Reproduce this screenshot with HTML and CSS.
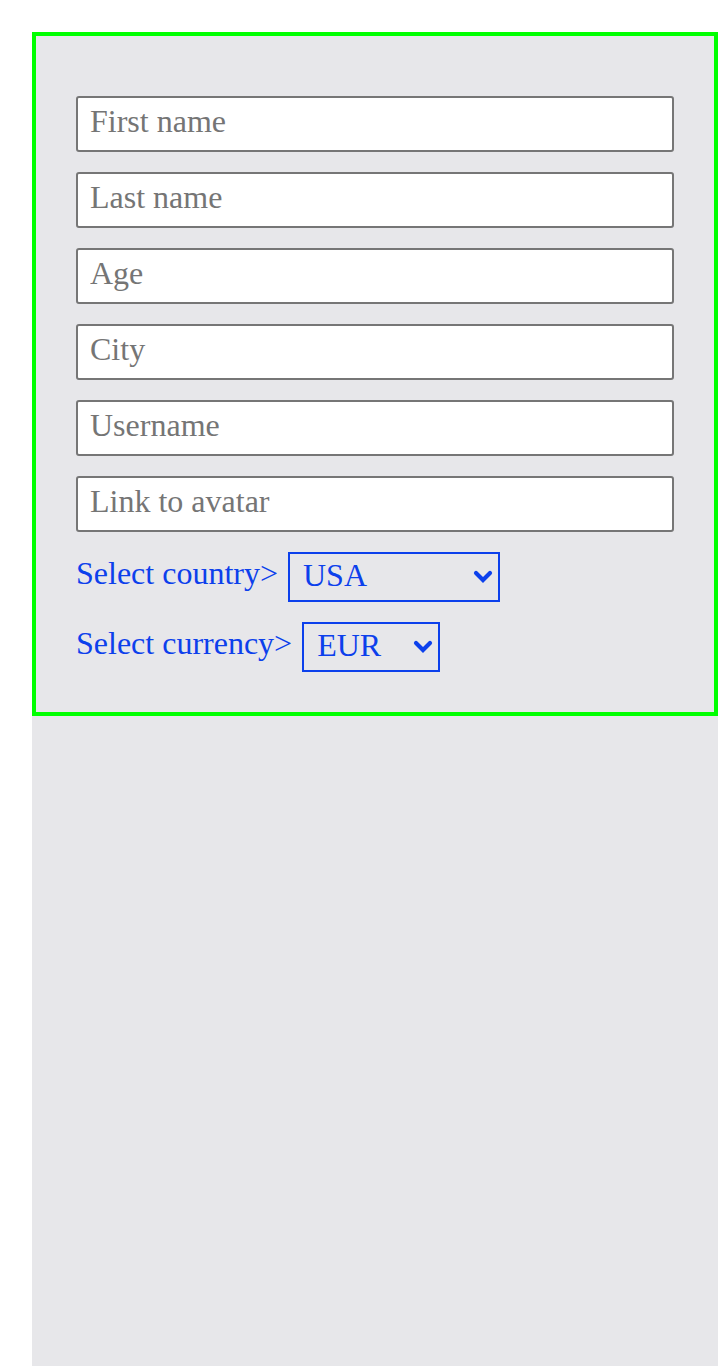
FILE: index.html
```html
<!DOCTYPE html>
<html lang="en">
<head>
<meta charset="utf-8">
<title>Form</title>
<link rel="stylesheet" href="styles.css">
</head>
<body>
<div class="page">
  <form class="form">
    <input class="field" type="text" placeholder="First name">
    <input class="field" type="text" placeholder="Last name">
    <input class="field" type="text" placeholder="Age">
    <input class="field" type="text" placeholder="City">
    <input class="field" type="text" placeholder="Username">
    <input class="field" type="text" placeholder="Link to avatar">
    <div class="row">
      <label class="label" for="country">Select country&gt;</label>
      <span class="select-wrap">
        <select class="select select-country" id="country">
          <option>USA</option>
          <option>Germany</option>
          <option>Ukraine</option>
        </select>
        <svg class="chevron" width="20" height="13" viewBox="0 0 20 13" aria-hidden="true">
          <polyline points="3,3 10,10 17,3" fill="none" stroke="currentColor" stroke-width="4.2" stroke-linecap="round" stroke-linejoin="miter"/>
        </svg>
      </span>
    </div>
    <div class="row">
      <label class="label" for="currency">Select currency&gt;</label>
      <span class="select-wrap">
        <select class="select select-currency" id="currency">
          <option>EUR</option>
          <option>USD</option>
          <option>UAH</option>
        </select>
        <svg class="chevron" width="20" height="13" viewBox="0 0 20 13" aria-hidden="true">
          <polyline points="3,3 10,10 17,3" fill="none" stroke="currentColor" stroke-width="4.2" stroke-linecap="round" stroke-linejoin="miter"/>
        </svg>
      </span>
    </div>
  </form>
</div>
</body>
</html>
```
FILE: styles.css
```css
html, body {
  margin: 0;
  padding: 0;
  background: #ffffff;
}

.page {
  margin: 32px 0 0 32px;
  min-height: calc(100vh - 32px);
  background: #e7e7ea;
  font-family: "Liberation Serif", "Times New Roman", serif;
}

.form {
  margin: 0;
  border: 4px solid #00ff00;
  padding: 40px;
}

.field {
  display: block;
  box-sizing: border-box;
  width: 100%;
  height: 56px;
  margin: 20px 0 0;
  padding: 0 12px 6px;
  border: 2px solid #767676;
  border-radius: 3px;
  background: #ffffff;
  font-family: "Liberation Serif", "Times New Roman", serif;
  font-size: 32px;
  color: #000000;
  outline: none;
}

.field::placeholder {
  color: #757575;
  opacity: 1;
}

.row {
  display: flex;
  align-items: flex-start;
  gap: 10px;
  margin-top: 20px;
}

.label {
  margin-top: 3px;
  font-size: 32px;
  line-height: normal;
  color: #0c40ec;
}

.select-wrap {
  position: relative;
  display: inline-flex;
  color: #0c40ec;
}

.select {
  -webkit-appearance: none;
  appearance: none;
  box-sizing: border-box;
  height: 50px;
  margin: 0;
  padding: 0 0 4px 13px;
  border: 2px solid #0c40ec;
  border-radius: 0;
  background-color: #e7e7ea;
  color: #0c40ec;
  font-family: "Liberation Serif", "Times New Roman", serif;
  font-size: 32px;
}

.select-country {
  width: 212px;
}

.select-currency {
  width: 138px;
}

.chevron {
  position: absolute;
  right: 7px;
  top: 18px;
  pointer-events: none;
}
```
